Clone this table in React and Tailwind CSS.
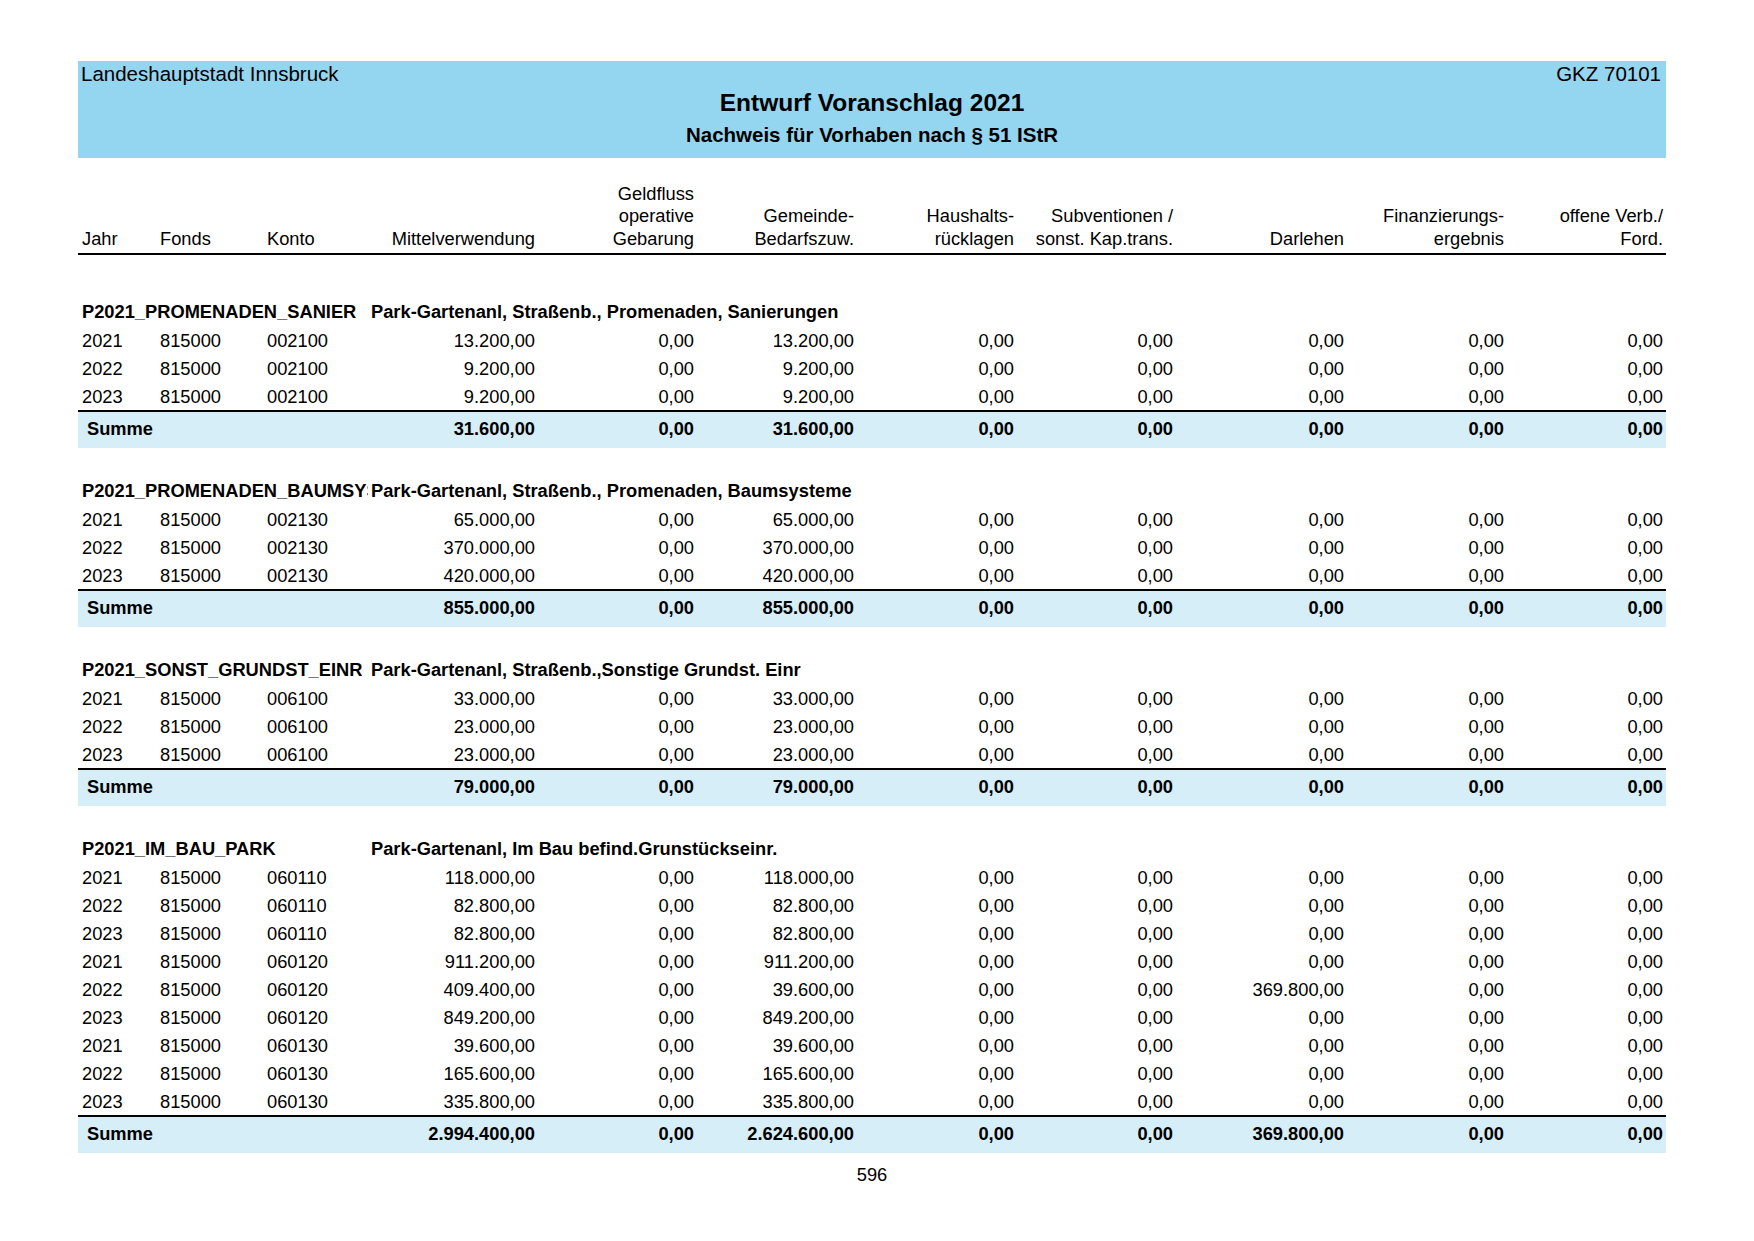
import React from 'react'

const grid = 'grid grid-cols-[78px_107px_100px_175px_159px_160px_160px_159px_171px_160px_159px]'

const Z = '0,00'

const groups = [
  {
    code: 'P2021_PROMENADEN_SANIER',
    title: 'Park-Gartenanl, Straßenb., Promenaden, Sanierungen',
    rows: [
      ['2021', '815000', '002100', '13.200,00', Z, '13.200,00', Z, Z, Z, Z, Z],
      ['2022', '815000', '002100', '9.200,00', Z, '9.200,00', Z, Z, Z, Z, Z],
      ['2023', '815000', '002100', '9.200,00', Z, '9.200,00', Z, Z, Z, Z, Z],
    ],
    sum: ['31.600,00', Z, '31.600,00', Z, Z, Z, Z, Z],
  },
  {
    code: 'P2021_PROMENADEN_BAUMSYSTEME',
    title: 'Park-Gartenanl, Straßenb., Promenaden, Baumsysteme',
    rows: [
      ['2021', '815000', '002130', '65.000,00', Z, '65.000,00', Z, Z, Z, Z, Z],
      ['2022', '815000', '002130', '370.000,00', Z, '370.000,00', Z, Z, Z, Z, Z],
      ['2023', '815000', '002130', '420.000,00', Z, '420.000,00', Z, Z, Z, Z, Z],
    ],
    sum: ['855.000,00', Z, '855.000,00', Z, Z, Z, Z, Z],
  },
  {
    code: 'P2021_SONST_GRUNDST_EINR',
    title: 'Park-Gartenanl, Straßenb.,Sonstige Grundst. Einr',
    rows: [
      ['2021', '815000', '006100', '33.000,00', Z, '33.000,00', Z, Z, Z, Z, Z],
      ['2022', '815000', '006100', '23.000,00', Z, '23.000,00', Z, Z, Z, Z, Z],
      ['2023', '815000', '006100', '23.000,00', Z, '23.000,00', Z, Z, Z, Z, Z],
    ],
    sum: ['79.000,00', Z, '79.000,00', Z, Z, Z, Z, Z],
  },
  {
    code: 'P2021_IM_BAU_PARK',
    title: 'Park-Gartenanl, Im Bau befind.Grunstückseinr.',
    rows: [
      ['2021', '815000', '060110', '118.000,00', Z, '118.000,00', Z, Z, Z, Z, Z],
      ['2022', '815000', '060110', '82.800,00', Z, '82.800,00', Z, Z, Z, Z, Z],
      ['2023', '815000', '060110', '82.800,00', Z, '82.800,00', Z, Z, Z, Z, Z],
      ['2021', '815000', '060120', '911.200,00', Z, '911.200,00', Z, Z, Z, Z, Z],
      ['2022', '815000', '060120', '409.400,00', Z, '39.600,00', Z, Z, '369.800,00', Z, Z],
      ['2023', '815000', '060120', '849.200,00', Z, '849.200,00', Z, Z, Z, Z, Z],
      ['2021', '815000', '060130', '39.600,00', Z, '39.600,00', Z, Z, Z, Z, Z],
      ['2022', '815000', '060130', '165.600,00', Z, '165.600,00', Z, Z, Z, Z, Z],
      ['2023', '815000', '060130', '335.800,00', Z, '335.800,00', Z, Z, Z, Z, Z],
    ],
    sum: ['2.994.400,00', Z, '2.624.600,00', Z, Z, '369.800,00', Z, Z],
  },
]

const headers = [
  ['Jahr'],
  ['Fonds'],
  ['Konto'],
  ['Mittelverwendung'],
  ['Geldfluss', 'operative', 'Gebarung'],
  ['Gemeinde-', 'Bedarfszuw.'],
  ['Haushalts-', 'rücklagen'],
  ['Subventionen /', 'sonst. Kap.trans.'],
  ['Darlehen'],
  ['Finanzierungs-', 'ergebnis'],
  ['offene Verb./', 'Ford.'],
]

function Group({ g, first }) {
  return (
    <div className={first ? 'mt-[42px]' : 'mt-[28px]'}>
      {/* project heading */}
      <div className="flex h-[29px] items-center font-bold whitespace-nowrap">
        <div className="w-[290px] overflow-hidden pl-[4px]">{g.code}</div>
        <div className="pl-[3px]">{g.title}</div>
      </div>

      {g.rows.map((r, i) => (
        <div key={i} className={`${grid} h-[28px] items-center`}>
          {r.map((v, j) => (
            <div key={j} className={j < 3 ? 'pl-[4px]' : 'text-right pr-[3px]'}>{v}</div>
          ))}
        </div>
      ))}

      <div className={`${grid} h-[38px] items-center border-t-2 border-black bg-[#d5eef8] pb-[3px] font-bold`}>
        <div className="col-span-3 pl-[9px]">Summe</div>
        {g.sum.map((v, j) => (
          <div key={j} className="text-right pr-[3px]">{v}</div>
        ))}
      </div>
    </div>
  )
}

export default function App() {
  return (
    <div className="w-[1754px] min-h-[1241px] bg-white text-black font-['Liberation_Sans',Arial,sans-serif] text-[18.3px]">
      <div className="ml-[78px] w-[1588px] pt-[61px]">

        {/* Title band */}
        <div className="h-[97px] bg-[#94d5ef]">
          <div className="flex h-[27px] items-center justify-between pl-[3px] pr-[5px] text-[20.5px]">
            <span>Landeshauptstadt Innsbruck</span>
            <span>GKZ 70101</span>
          </div>
          <div className="text-center text-[24.5px] font-bold leading-[29px]">Entwurf Voranschlag 2021</div>
          <div className="mt-[3px] text-center text-[20.5px] font-bold leading-[29px]">Nachweis für Vorhaben nach § 51 IStR</div>
        </div>

        {/* Column headings */}
        <div className={`${grid} mt-[25px] items-end border-b-2 border-black pb-[3px] leading-[22.4px]`}>
          {headers.map((h, j) => (
            <div key={j} className={j < 3 ? 'pl-[4px]' : 'text-right pr-[3px]'}>
              {h.map(l => <div key={l}>{l}</div>)}
            </div>
          ))}
        </div>

        {groups.map((g, i) => <Group key={g.code} g={g} first={i === 0} />)}

        <div className="mt-[11px] text-center leading-[22px]">596</div>
      </div>
    </div>
  )
}
